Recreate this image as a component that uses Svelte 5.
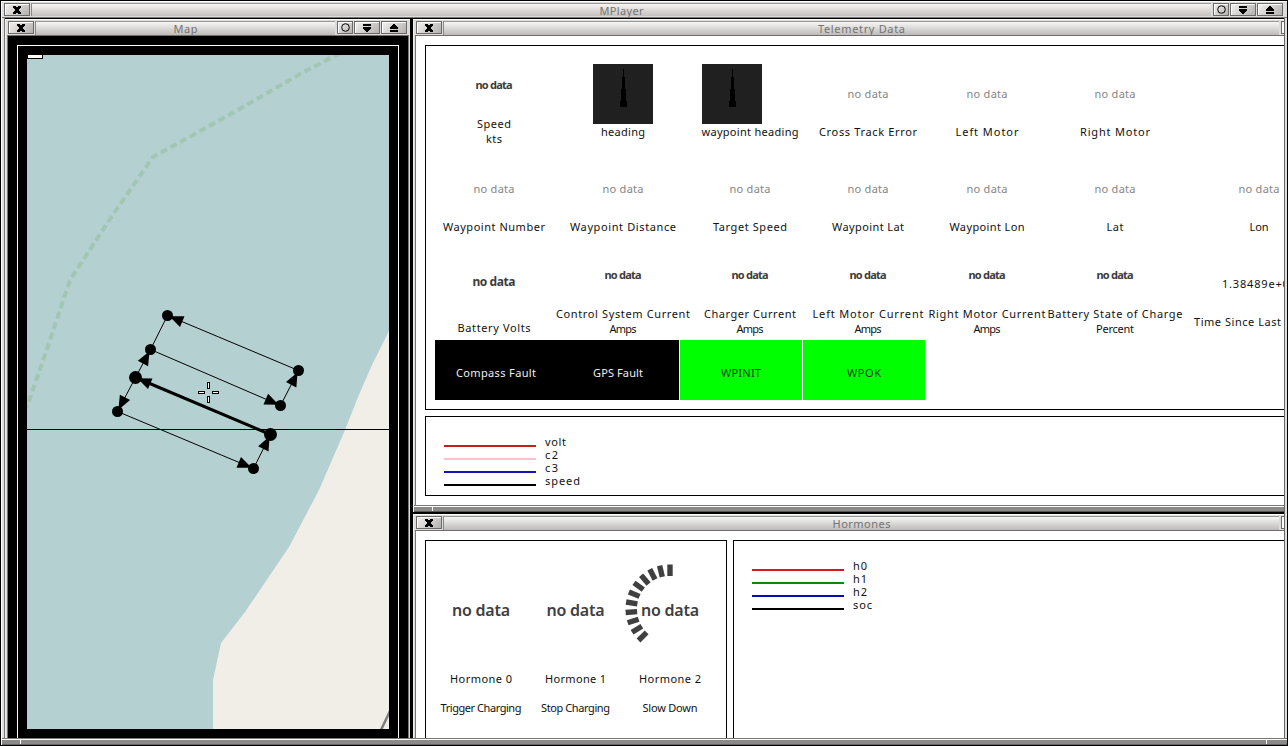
<script>
  // Spread or tighten the letters so a label takes exactly `width` pixels.
  function fit(node, width) {
    const n = node.textContent.trim().length;
    const gap = (width - node.getBoundingClientRect().width) / Math.max(1, n - 1);
    node.style.letterSpacing = gap + 'px';
    node.style.marginRight = -gap + 'px';
  }

  const nd = ['no data', 41];
  const ndBold = ['no data', 37];
  const rows = [
    [
      { kind: 'meter', value: ndBold, labels: [['Speed', 34], ['kts', 16]] },
      { kind: 'dial', labels: [['heading', 44]] },
      { kind: 'dial', side: true, labels: [['waypoint heading', 97]] },
      { kind: 'plain', value: nd, labels: [['Cross Track Error', 98]] },
      { kind: 'plain', value: nd, labels: [['Left Motor', 63]] },
      { kind: 'plain', value: nd, labels: [['Right Motor', 70]] },
      { kind: 'plain', labels: [] }
    ],
    [
      ['Waypoint Number', 102], ['Waypoint Distance', 106], ['Target Speed', 74], ['Waypoint Lat', 72],
      ['Waypoint Lon', 75], ['Lat', 17], ['Lon', 19]
    ].map((l) => ({ kind: 'plain', value: nd, labels: [l] })),
    [
      { kind: 'volts', value: ['no data', 43], labels: [['Battery Volts', 73]] },
      { kind: 'meter', value: ndBold, labels: [['Control System Current', 134], ['Amps', 27]] },
      { kind: 'meter', value: ndBold, labels: [['Charger Current', 92], ['Amps', 27]] },
      { kind: 'meter', value: ndBold, labels: [['Left Motor Current', 111], ['Amps', 27]] },
      { kind: 'meter', value: ndBold, labels: [['Right Motor Current', 117], ['Amps', 27]] },
      { kind: 'meter', value: ndBold, labels: [['Battery State of Charge', 135], ['Percent', 38]] },
      { kind: 'plain', dark: true, start: true, value: ['1.38489e+09', 74], labels: [['Time Since Last', 87]] }
    ]
  ];
  const faults = [['Compass Fault', 80, false], ['GPS Fault', 50, false], ['WPINIT', 40, true], ['WPOK', 34, true]];
  const telemetryLegend = [['volt', 21, '#c81e1e'], ['c2', 13, '#f9c3cd'], ['c3', 13, '#1414b4'], ['speed', 35, '#000']];
  const hormoneLegend = [['h0', 14, '#d81818'], ['h1', 14, '#148214'], ['h2', 14, '#0a0ab4'], ['soc', 19, '#000']];
  const hormones = [
    { name: 'Hormone 0', w: 62, note: ['Trigger Charging', 81] },
    { name: 'Hormone 1', w: 61, note: ['Stop Charging', 69] },
    { name: 'Hormone 2', w: 62, note: ['Slow Down', 55], gauge: true }
  ];
  const ticks = Array.from({ length: 11 }, (_, i) => -i * 13.5);

  const nodes = {
    A: [167.5, 315.5], B: [150.5, 349.5], C: [135.5, 377.5], D: [117.5, 411.5],
    E: [298.5, 370.5], F: [280.5, 405.5], G: [270.5, 434.5], H: [253.5, 468.5]
  };
  const legs = [['E', 'A'], ['B', 'F'], ['F', 'E'], ['H', 'G'], ['D', 'H'], ['G', 'C'], ['C', 'D'], ['C', 'B']];
  function head([a, b]) {
    const [x1, y1] = nodes[a], [x2, y2] = nodes[b];
    const d = Math.hypot(x2 - x1, y2 - y1);
    const ux = (x2 - x1) / d, uy = (y2 - y1) / d;
    const bx = x2 - ux * 16, by = y2 - uy * 16;
    return `${x2 - ux * 2},${y2 - uy * 2} ${bx - uy * 5.8},${by + ux * 5.8} ${bx + uy * 5.8},${by - ux * 5.8}`;
  }
</script>

{#snippet closeButton()}
  <span class="btn wide">
    <svg width="8" height="8" viewBox="0 0 8 8" shape-rendering="crispEdges"><path d="M0 0h3v1h2V0h3v2H7v1H6v2h1v1h1v2H5V7H3v1H0V6h1V5h1V3H1V2H0z" /></svg>
  </span>
{/snippet}

{#snippet titlebar(title, width, cut)}
  <header class="bar">
    {@render closeButton()}
    <div class="title"><span use:fit={width}>{title}</span></div>
    {#if cut}
      <span class="btn stub"></span>
    {:else}
      <span class="btn ring"><svg width="9" height="9" viewBox="0 0 9 9"><circle cx="4.5" cy="4.5" r="3.8" fill="none" stroke="#000" /></svg></span>
      <span class="btn wide"><svg width="8" height="8" viewBox="0 0 8 8" shape-rendering="crispEdges"><path d="M0 0h8v2H0zM0 3h8v2H7v1H6v1H5v1H3V7H2V6H1V5H0z" /></svg></span>
      <span class="btn wide"><svg width="8" height="8" viewBox="0 0 8 8" shape-rendering="crispEdges"><path d="M3 0h2v1h1v1h1v1h1v2H0V3h1V2h1V1h1zM0 6h8v2H0z" /></svg></span>
    {/if}
  </header>
{/snippet}

{#snippet legend(items)}
  <ul class="legend">
    {#each items as [name, w, color]}
      <li><i style="background:{color}"></i><span use:fit={w}>{name}</span></li>
    {/each}
  </ul>
{/snippet}

<div class="screen">
  <div class="outer">
    {@render titlebar('MPlayer', 44, false)}
    <main>
      <section class="win map">
        {@render titlebar('Map', 24, false)}
        <div class="mapbody">
          <div class="mapframe">
            <svg width="362" height="674" viewBox="27 55 362 674">
              <rect x="27" y="55" width="362" height="674" fill="#b5d0d0" />
              <path d="M389 331L372 365L358 397L345 430L319 490L289 547L245 612L221 643L213 680V729H389z" fill="#f1eee8" />
              <path d="M340 53L300 74L236 111L153 157L112 216L70 280L49 343L27 407" fill="none" stroke="#a1c6b3" stroke-width="4" stroke-dasharray="7 4" />
              <path d="M381 730L390 711" stroke="#7d7d7b" stroke-width="2.5" />
              <path d="M27 429.5H389" stroke="#000" shape-rendering="crispEdges" />
              <g stroke="#000" stroke-width="1">
                <path d="M{nodes.A}L{nodes.B}" />
                {#each legs as leg}
                  <path d="M{nodes[leg[0]]}L{nodes[leg[1]]}" stroke-width={leg[0] === 'G' ? 3 : 1} />
                {/each}
              </g>
              {#each legs as leg}<polygon points={head(leg)} />{/each}
              {#each Object.entries(nodes) as [id, [x, y]]}
                <circle cx={x} cy={y} r={id === 'C' || id === 'G' ? 6.5 : 5.5} />
              {/each}
              <g fill="#fff" stroke="#000" shape-rendering="crispEdges">
                <rect x="198.5" y="391.5" width="6" height="2" /><rect x="212.5" y="391.5" width="6" height="2" />
                <rect x="207.5" y="382.5" width="2" height="6" /><rect x="207.5" y="396.5" width="2" height="6" />
              </g>
              <path d="M27 55H43V59H27z" /><path d="M28 55H42V58H28z" fill="#fff" />
            </svg>
          </div>
        </div>
      </section>

      <div class="right">
        <section class="win telemetry">
          {@render titlebar('Telemetry Data', 87, true)}
          <div class="body">
            <div class="panel data">
              {#each rows as row}
                <div class="row">
                  {#each row as cell}
                    <div class="cell {cell.kind}" class:dark={cell.dark} class:start={cell.start}>
                      <div class="value">
                        {#if cell.kind === 'dial'}
                          <svg class:side={cell.side} width="60" height="60" shape-rendering="crispEdges"><rect width="60" height="60" fill="#202020" /><path d="M30 5h1v8h1v12h1v12h1v6h-7v-6h1V25h1V13h1z" /></svg>
                        {:else if cell.value}
                          <span use:fit={cell.value[1]}>{cell.value[0]}</span>
                        {/if}
                      </div>
                      {#each cell.labels as [text, w]}
                        <div class="label"><span use:fit={w}>{text}</span></div>
                      {/each}
                    </div>
                  {/each}
                </div>
              {/each}
              <div class="faults">
                {#each faults as [name, w, ok]}
                  <div class="fault" class:ok><span use:fit={w}>{name}</span></div>
                {/each}
              </div>
            </div>
            <div class="panel plot">{@render legend(telemetryLegend)}</div>
          </div>
          <div class="handle"></div>
        </section>

        <section class="win hormones">
          {@render titlebar('Hormones', 58, true)}
          <div class="body split">
            <div class="panel gauges">
              {#each hormones as h}
                <div class="hormone">
                  <div class="big">
                    <span use:fit={58}>no data</span>
                    {#if h.gauge}
                      <svg width="92" height="92" viewBox="-46 -46 92 92">
                        {#each ticks as t}<rect x="-2.7" y="-44.5" width="5.4" height="11.5" fill="#404040" transform="rotate({t})" />{/each}
                      </svg>
                    {/if}
                  </div>
                  <div class="name"><span use:fit={h.w}>{h.name}</span></div>
                  <div class="note"><span use:fit={h.note[1]}>{h.note[0]}</span></div>
                </div>
              {/each}
            </div>
            <div class="panel chart">{@render legend(hormoneLegend)}</div>
          </div>
        </section>
      </div>
    </main>
    <footer class="handle base"></footer>
  </div>
</div>

<style>
  :global(body) { margin: 0; background: #000; }
  .screen {
    box-sizing: border-box; width: 1288px; height: 746px; padding: 1px; background: #000; overflow: hidden;
    font: 11px/15px "Noto Sans", sans-serif; color: #111;
  }
  .screen * { box-sizing: border-box; }
  span { white-space: nowrap; display: inline-block; }
  svg { display: block; flex: none; }

  .outer { display: flex; flex-direction: column; height: 744px; background: #e2dedc; border-top: 1px solid #fff; border-left: 1px solid #fff; }
  .outer > .bar { height: 16px; padding: 1px 4px 2px 2px; border-bottom: 1px solid #777; }
  .outer > .bar .title { background: linear-gradient(#f8f4f2, #c4c0be); line-height: 13px; }
  main { display: flex; height: 720px; margin: 0 2px 0 2px; border-left: 1px solid #777; border-right: 1px solid #666; background: #000; overflow: hidden; }

  .bar { display: flex; flex: none; align-items: stretch; background: #dedcda; }
  .btn {
    display: flex; align-items: center; justify-content: center; flex: none; height: 13px;
    border: 1px solid #6c6a69; box-shadow: inset 1px 1px #fff; background: linear-gradient(135deg, #f4f2f0, #b4b0ae);
  }
  .wide { width: 26px; margin-right: 1px; }
  .ring { width: 16px; margin: 0 1px 0 2px; }
  .stub { width: 16px; margin-left: 2px; margin-right: -14px; background: #fff; }
  .wide:last-child { margin-right: 0; }
  .title {
    flex: 1; height: 13px; display: flex; justify-content: center; border-left: 1px solid #888; border-top: 1px solid #999;
    background: linear-gradient(#f6f6f4, #bdbbb9); color: #757371; line-height: 13px;
  }

  .win { display: flex; flex-direction: column; background: #dedcda; border-left: 1px solid #eee; border-top: 1px solid #fff; }
  .win > .bar { height: 16px; padding: 1px 1px 1px 0; border-bottom: 1px solid #6e6e6e; }
  .win > .bar .title { height: 14px; line-height: 14px; }
  .map { width: 405px; margin: 1px 1px 0 0; padding: 0 1px; flex: none; height: 719px; }
  .map > .bar { padding: 1px 2px 1px 1px; }
  .mapbody { flex: 1; background: #000; padding: 9px 9px 0; width: 402px; border-left: 1px solid #777; border-right: 1px solid #777; }
  .mapframe { height: 694px; border: 1px solid #fff; border-bottom: 0; padding: 9px 9px 0; }

  .right { flex: 1; min-width: 0; margin-left: 2px; display: flex; flex-direction: column; gap: 2px; padding-top: 1px; }
  .telemetry { height: 493px; padding-left: 1px; flex: none; }
  .hormones { flex: 1; padding-left: 1px; }
  .right .bar { padding-left: 1px; }
  .body { background: #fff; border-left: 1px solid #777; padding: 9px 0 9px 9px; flex: 1; min-height: 0; overflow: hidden; }
  .panel { border: 1px solid #000; border-right: 0; }
  .data { height: 365px; padding: 18px 0 0 9px; overflow: hidden; }
  .plot { height: 80px; margin-top: 6px; padding: 18px 0 0 18px; }
  .plot i { margin-top: 9px; }

  .row { display: grid; grid-template-columns: 118px 140px 114px 122px 116px 140px 148px; height: 95px; }
  .row:nth-child(3) { height: 86px; }
  .cell { text-align: center; }
  .cell > div { display: flex; justify-content: center; }
  .value { height: 60px; align-items: center; color: #858585; }
  .plain .value, .meter .value { padding-bottom: 2px; }
  .label { height: 15px; color: #111; }
  .side { margin-right: 36px; }
  .meter .value { height: 42px; margin-bottom: 10px; }
  .volts .value { height: 54px; margin-bottom: 12px; font-size: 12px; }
  .meter .value, .volts .value { font-weight: 700; color: #3c3c3c; }
  .dark .value { color: #111; }
  .cell.start .label { justify-content: flex-start; padding-left: 9px; }

  .faults { display: flex; }
  .fault { width: 122px; height: 60px; background: #000; color: #eee; display: flex; align-items: center; justify-content: center; padding-top: 4px; }
  .fault.ok { background: #0f0; color: #113c11; margin-left: 1px; }

  .legend { list-style: none; margin: 0; padding: 0; }
  .legend li { display: flex; align-items: center; height: 13px; line-height: 13px; }
  .legend i { width: 92px; height: 2px; margin: 9px 9px 0 0; }

  .handle { flex: none; height: 7px; border-top: 1px solid #777; border-bottom: 1px solid #555; box-shadow: inset 0 1px #fff; background: linear-gradient(90deg, #8c8a89 18px, #fff 18px 19px, #8c8a89 19px); margin-left: -1px; }
  .handle.base { margin: 0; border-bottom-color: #666; background: linear-gradient(90deg, #8c8a89 18px, #fff 18px 19px, #8c8a89 19px 1264px, #fff 1264px 1265px, #8c8a89 1265px); }

  .split { display: flex; gap: 6px; padding-bottom: 0; }
  .gauges { width: 302px; border-right: 1px solid #000; border-bottom: 0; display: grid; grid-template-columns: 94px 95px 94px; padding: 22px 0 0 8px; flex: none; }
  .chart { flex: 1; border-bottom: 0; padding: 18px 0 0 18px; }
  .hormone > div { display: flex; justify-content: center; }
  .big { position: relative; height: 93px; align-items: center; font: 600 16px/20px "Noto Sans", sans-serif; color: #404040; }
  .big svg { position: absolute; top: 0; left: 1px; }
  .name { padding-top: 15px; }
  .note { padding-top: 14px; }
</style>
